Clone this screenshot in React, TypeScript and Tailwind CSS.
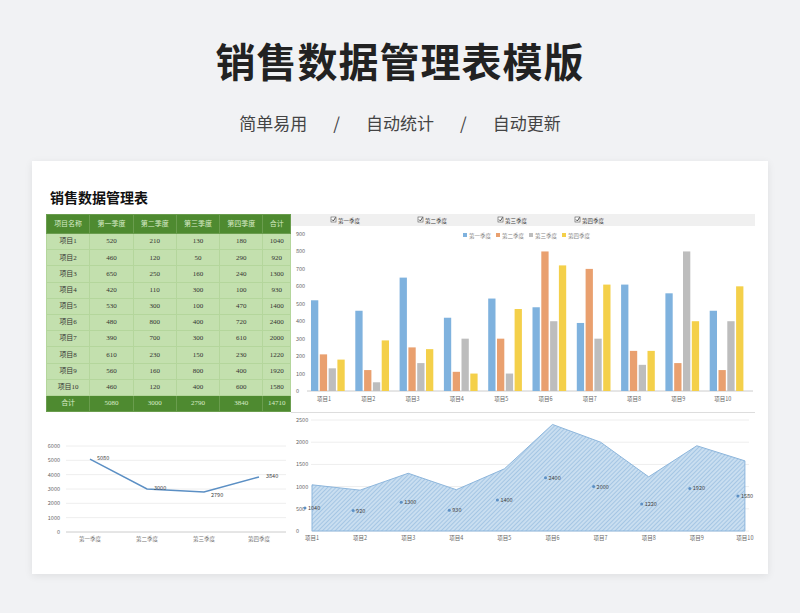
const rows = [
  ['项目1', 520, 210, 130, 180, 1040],
  ['项目2', 460, 120, 50, 290, 920],
  ['项目3', 650, 250, 160, 240, 1300],
  ['项目4', 420, 110, 300, 100, 930],
  ['项目5', 530, 300, 100, 470, 1400],
  ['项目6', 480, 800, 400, 720, 2400],
  ['项目7', 390, 700, 300, 610, 2000],
  ['项目8', 610, 230, 150, 230, 1220],
  ['项目9', 560, 160, 800, 400, 1920],
  ['项目10', 460, 120, 400, 600, 1580],
] as const;
const heads = ['项目名称', '第一季度', '第二季度', '第三季度', '第四季度', '合计'];
const colors = ['#7fb2de', '#e9a06f', '#bdbdbd', '#f4d04a'];
const serif = { fontFamily: '"Liberation Serif","Noto Sans CJK SC",serif' };

function BarChart() {
  const y0 = 177, k = 157 / 900;
  return (
    <svg width="464" height="190" className="block">
      <rect x="0" y="0" width="464" height="12" fill="#f0f0f0" />
      {['第一季度', '第二季度', '第三季度', '第四季度'].map((t, i) => (
        <g key={t} transform={`translate(${[40, 127, 207, 284][i]},0)`}>
          <rect x="0" y="3" width="5" height="5" fill="#fff" stroke="#555" strokeWidth="0.6" />
          <path d="M1 5.5 L2.4 7 L4.5 3.5" stroke="#222" strokeWidth="0.8" fill="none" />
          <text x="7" y="8.5" fontSize="5.5" fill="#444">{t}</text>
        </g>
      ))}
      {['第一季度', '第二季度', '第三季度', '第四季度'].map((t, i) => (
        <g key={t} transform={`translate(${172 + i * 33},0)`}>
          <rect x="0" y="19" width="4" height="4" fill={colors[i]} />
          <text x="6" y="23.5" fontSize="5.5" fill="#888">{t}</text>
        </g>
      ))}
      {[0, 100, 200, 300, 400, 500, 600, 700, 800, 900].map((v) => (
        <text key={v} x="5" y={y0 - v * k + 2} fontSize="5.5" fill="#666">{v}</text>
      ))}
      <line x1="16" x2="462" y1={y0} y2={y0} stroke="#ccc" />
      {rows.map((r, g) => (
        <g key={g}>
          {[1, 2, 3, 4].map((j) => {
            const v = r[j] as number;
            return <rect key={j} x={20 + g * 44.3 + (j - 1) * 8.8} y={y0 - v * k} width="7.3" height={v * k} fill={colors[j - 1]} />;
          })}
          <text x={33 + g * 44.3} y={y0 + 10} fontSize="5.5" fill="#666" textAnchor="middle">{r[0]}</text>
        </g>
      ))}
    </svg>
  );
}

function LineChart() {
  const y0 = 118, k = 86 / 6000;
  const xs = [44, 101, 158, 213];
  const vals = [5080, 3000, 2790, 3840];
  return (
    <svg width="245" height="135" className="block">
      {[0, 1000, 2000, 3000, 4000, 5000, 6000].map((v) => (
        <g key={v}>
          <line x1="20" x2="240" y1={y0 - v * k} y2={y0 - v * k} stroke={v ? '#eee' : '#ccc'} />
          <text x="14" y={y0 - v * k + 2} fontSize="5.5" fill="#666" textAnchor="end">{v}</text>
        </g>
      ))}
      <polyline points={xs.map((x, i) => `${x},${y0 - vals[i] * k}`).join(' ')} fill="none" stroke="#5b8fc4" strokeWidth="1.5" />
      {xs.map((x, i) => (
        <g key={i}>
          <text x={x + 7} y={y0 - vals[i] * k + (i === 2 ? 5 : 1)} fontSize="5.5" fill="#444">{vals[i]}</text>
          <text x={x} y={y0 + 9} fontSize="5.5" fill="#777" textAnchor="middle">{['第一季度', '第二季度', '第三季度', '第四季度'][i]}</text>
        </g>
      ))}
    </svg>
  );
}

function AreaChart() {
  const y0 = 118, k = 111 / 2500;
  const vals = rows.map((r) => r[5] as number);
  const xs = vals.map((_, i) => 21 + i * 48.1);
  const pts = vals.map((v, i) => `${xs[i]},${y0 - v * k}`).join(' ');
  return (
    <svg width="464" height="140" className="block">
      <defs>
        <pattern id="hatch" width="3" height="3" patternUnits="userSpaceOnUse" patternTransform="rotate(45)">
          <rect width="3" height="3" fill="#c9def0" />
          <line x1="0" y1="0" x2="0" y2="3" stroke="#8db6dc" strokeWidth="1.2" />
        </pattern>
      </defs>
      {[0, 500, 1000, 1500, 2000, 2500].map((v) => (
        <g key={v}>
          <line x1="20" x2="458" y1={y0 - v * k} y2={y0 - v * k} stroke="#eee" />
          <text x="5" y={y0 - v * k + 2} fontSize="5.5" fill="#666">{v}</text>
        </g>
      ))}
      <polygon points={`${xs[0]},${y0} ${pts} ${xs[9]},${y0}`} fill="url(#hatch)" stroke="#8db6dc" strokeWidth="1" />
      {vals.map((v, i) => (
        <g key={i}>
          <circle cx={xs[i] - 7} cy={y0 - (v / 2) * k} r="1.5" fill="#5b8fc4" />
          <text x={xs[i] - 4} y={y0 - (v / 2) * k + 2} fontSize="5.5" fill="#444">{v}</text>
          <text x={xs[i]} y={y0 + 9} fontSize="5.5" fill="#666" textAnchor="middle">{rows[i][0]}</text>
        </g>
      ))}
    </svg>
  );
}

export default function App() {
  return (
    <div className="w-[800px] h-[613px] bg-[#f1f2f4] flex flex-col items-center" style={{ fontFamily: '"Noto Sans CJK SC",sans-serif' }}>
      <h1 className="mt-[30px] text-[40px] leading-[60px] font-bold text-[#222] tracking-[1px]">销售数据管理表模版</h1>
      <div className="mt-[20px] text-[17px] leading-[26px] text-[#444] flex gap-[26px]">
        <span>简单易用</span><span>/</span><span>自动统计</span><span>/</span><span>自动更新</span>
      </div>
      <div className="mt-[25px] w-[736px] h-[413px] bg-white shadow-[0_2px_8px_rgba(0,0,0,0.08)] pl-[14px] pt-[28px]">
        <div className="flex">
          <div className="w-[245px]">
            <div className="text-[14px] leading-[20px] font-bold text-[#111] pl-[4px] mb-[5px]" style={serif}>销售数据管理表</div>
            <table className="border-collapse text-[7px] text-[#333] w-[245px]" style={serif}>
              <thead>
                <tr className="bg-[#4e8a30] text-[#d9ecc8] h-[19px]">
                  {heads.map((h) => <th key={h} className="font-normal border border-[#6a9d4e]">{h}</th>)}
                </tr>
              </thead>
              <tbody>
                {rows.map((r) => (
                  <tr key={r[0]} className="bg-[#c3e0ae] h-[16.2px]">
                    {r.map((c, i) => <td key={i} className="text-center border border-[#b4d69c]">{c}</td>)}
                  </tr>
                ))}
                <tr className="bg-[#4e8a30] text-[#d9ecc8] h-[16px]">
                  {['合计', 5080, 3000, 2790, 3840, 14710].map((c, i) => <td key={i} className="text-center border border-[#6a9d4e]">{c}</td>)}
                </tr>
              </tbody>
            </table>
            <div className="mt-[2px]"><LineChart /></div>
          </div>
          <div className="w-[464px] pt-[25px]">
            <BarChart />
            <div className="border-t border-[#ddd] mt-[8px]"><AreaChart /></div>
          </div>
        </div>
      </div>
    </div>
  );
}
